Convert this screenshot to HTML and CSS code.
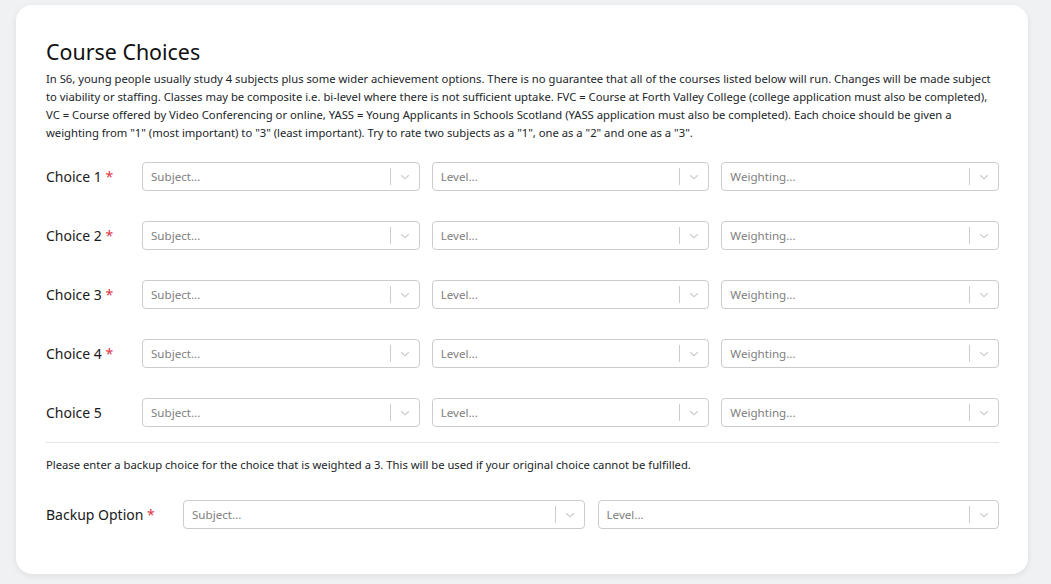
FILE: index.html
```html
<!DOCTYPE html>
<html>
<head>
<meta charset="utf-8">
<link rel="stylesheet" href="styles.css">
</head>
<body>
<div class="card">
  <h2 class="title">Course Choices</h2>
  <p class="intro">In S6, young people usually study 4 subjects plus some wider achievement options. There is no guarantee that all of the courses listed below will run. Changes will be made subject to viability or staffing. Classes may be composite i.e. bi-level where there is not sufficient uptake. FVC = Course at Forth Valley College (college application must also be completed), VC = Course offered by Video Conferencing or online, YASS = Young Applicants in Schools Scotland (YASS application must also be completed). Each choice should be given a weighting from "1" (most important) to "3" (least important). Try to rate two subjects as a "1", one as a "2" and one as a "3".</p>

  <div class="choices">
    <div class="row">
      <label class="label">Choice 1 <span class="req">*</span></label>
      <div class="select"><span class="ph">Subject...</span><span class="ind"><span class="sep"></span><svg class="chev" viewBox="0 0 20 20"><path d="M4.5 7.5 L10 12.5 L15.5 7.5"/></svg></span></div>
      <div class="select"><span class="ph">Level...</span><span class="ind"><span class="sep"></span><svg class="chev" viewBox="0 0 20 20"><path d="M4.5 7.5 L10 12.5 L15.5 7.5"/></svg></span></div>
      <div class="select"><span class="ph">Weighting...</span><span class="ind"><span class="sep"></span><svg class="chev" viewBox="0 0 20 20"><path d="M4.5 7.5 L10 12.5 L15.5 7.5"/></svg></span></div>
    </div>
    <div class="row">
      <label class="label">Choice 2 <span class="req">*</span></label>
      <div class="select"><span class="ph">Subject...</span><span class="ind"><span class="sep"></span><svg class="chev" viewBox="0 0 20 20"><path d="M4.5 7.5 L10 12.5 L15.5 7.5"/></svg></span></div>
      <div class="select"><span class="ph">Level...</span><span class="ind"><span class="sep"></span><svg class="chev" viewBox="0 0 20 20"><path d="M4.5 7.5 L10 12.5 L15.5 7.5"/></svg></span></div>
      <div class="select"><span class="ph">Weighting...</span><span class="ind"><span class="sep"></span><svg class="chev" viewBox="0 0 20 20"><path d="M4.5 7.5 L10 12.5 L15.5 7.5"/></svg></span></div>
    </div>
    <div class="row">
      <label class="label">Choice 3 <span class="req">*</span></label>
      <div class="select"><span class="ph">Subject...</span><span class="ind"><span class="sep"></span><svg class="chev" viewBox="0 0 20 20"><path d="M4.5 7.5 L10 12.5 L15.5 7.5"/></svg></span></div>
      <div class="select"><span class="ph">Level...</span><span class="ind"><span class="sep"></span><svg class="chev" viewBox="0 0 20 20"><path d="M4.5 7.5 L10 12.5 L15.5 7.5"/></svg></span></div>
      <div class="select"><span class="ph">Weighting...</span><span class="ind"><span class="sep"></span><svg class="chev" viewBox="0 0 20 20"><path d="M4.5 7.5 L10 12.5 L15.5 7.5"/></svg></span></div>
    </div>
    <div class="row">
      <label class="label">Choice 4 <span class="req">*</span></label>
      <div class="select"><span class="ph">Subject...</span><span class="ind"><span class="sep"></span><svg class="chev" viewBox="0 0 20 20"><path d="M4.5 7.5 L10 12.5 L15.5 7.5"/></svg></span></div>
      <div class="select"><span class="ph">Level...</span><span class="ind"><span class="sep"></span><svg class="chev" viewBox="0 0 20 20"><path d="M4.5 7.5 L10 12.5 L15.5 7.5"/></svg></span></div>
      <div class="select"><span class="ph">Weighting...</span><span class="ind"><span class="sep"></span><svg class="chev" viewBox="0 0 20 20"><path d="M4.5 7.5 L10 12.5 L15.5 7.5"/></svg></span></div>
    </div>
    <div class="row">
      <label class="label">Choice 5</label>
      <div class="select"><span class="ph">Subject...</span><span class="ind"><span class="sep"></span><svg class="chev" viewBox="0 0 20 20"><path d="M4.5 7.5 L10 12.5 L15.5 7.5"/></svg></span></div>
      <div class="select"><span class="ph">Level...</span><span class="ind"><span class="sep"></span><svg class="chev" viewBox="0 0 20 20"><path d="M4.5 7.5 L10 12.5 L15.5 7.5"/></svg></span></div>
      <div class="select"><span class="ph">Weighting...</span><span class="ind"><span class="sep"></span><svg class="chev" viewBox="0 0 20 20"><path d="M4.5 7.5 L10 12.5 L15.5 7.5"/></svg></span></div>
    </div>
  </div>

  <hr class="divider">

  <p class="note">Please enter a backup choice for the choice that is weighted a 3. This will be used if your original choice cannot be fulfilled.</p>

  <div class="backup">
    <label class="label">Backup Option <span class="req">*</span></label>
    <div class="select"><span class="ph">Subject...</span><span class="ind"><span class="sep"></span><svg class="chev" viewBox="0 0 20 20"><path d="M4.5 7.5 L10 12.5 L15.5 7.5"/></svg></span></div>
    <div class="select"><span class="ph">Level...</span><span class="ind"><span class="sep"></span><svg class="chev" viewBox="0 0 20 20"><path d="M4.5 7.5 L10 12.5 L15.5 7.5"/></svg></span></div>
  </div>
</div>
</body>
</html>
```

FILE: styles.css
```css
* { box-sizing: border-box; }

html, body {
  margin: 0;
  padding: 0;
  background: #f0f1f3;
}

body {
  padding: 5px 23px 10px 16px;
  font-family: "Noto Sans", "Open Sans", sans-serif;
  color: #212529;
}

.card {
  background: #ffffff;
  border-radius: 16px;
  box-shadow: 0 2px 6px rgba(0, 0, 0, 0.08);
  padding: 30px 29px 46px 30px;
  height: 569px;
}

.title {
  margin: 0;
  font-size: 21.4px;
  font-weight: 400;
  line-height: 34px;
  color: #111;
}

.intro {
  margin: 1px 0 0 0;
  font-size: 11.25px;
  line-height: 18px;
  color: #212529;
}

.choices {
  margin-top: 20px;
  display: flex;
  flex-direction: column;
  gap: 30px;
}

.row {
  display: grid;
  grid-template-columns: 84px 1fr 1fr 1fr;
  column-gap: 12px;
  align-items: center;
}

.label {
  font-size: 14px;
  color: #1a1a1a;
  white-space: nowrap;
}

.req { color: #dc3545; }

.select {
  height: 29px;
  border: 1px solid #cccccc;
  border-radius: 4px;
  background: #fff;
  display: flex;
  align-items: center;
  padding-left: 8px;
}

.ph {
  flex: 1;
  font-size: 11.6px;
  color: #808080;
  white-space: nowrap;
  overflow: hidden;
}

.ind {
  display: flex;
  align-items: center;
  height: 100%;
}

.sep {
  width: 1px;
  height: 17px;
  background: #cccccc;
}

.chev {
  width: 28px;
  height: 14px;
  padding: 0 7px;
  fill: none;
  stroke: #cccccc;
  stroke-width: 1.6;
}

.divider {
  margin: 15px 0 0 0;
  border: 0;
  border-top: 1px solid #e4e4e4;
}

.note {
  margin: 13px 0 0 0;
  font-size: 11.25px;
  line-height: 18px;
}

.backup {
  margin-top: 26px;
  display: grid;
  grid-template-columns: 124px 1fr 1fr;
  column-gap: 13px;
  align-items: center;
}
```
